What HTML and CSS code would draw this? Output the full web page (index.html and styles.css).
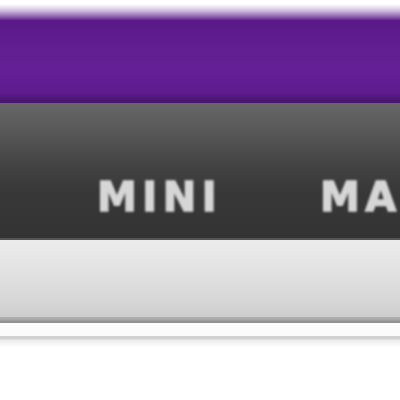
FILE: index.html
```html
<!DOCTYPE html>
<html>
<head>
<meta charset="utf-8">
<link rel="stylesheet" href="styles.css">
</head>
<body>
<div class="page">
  <div class="fade"></div>
  <header class="brand"></header>
  <nav class="nav">
    <span class="nav-item">MINI</span>
    <span class="nav-item">MAXI</span>
  </nav>
  <div class="subbar"></div>
  <div class="rule-dark"></div>
  <div class="strip"></div>
  <div class="rule-light"></div>
</div>
</body>
</html>
```
FILE: styles.css
```css
html, body {
  margin: 0;
  padding: 0;
  background: #ffffff;
  overflow: hidden;
}
.page {
  width: 400px;
  height: 400px;
  display: flex;
  flex-direction: column;
  overflow: hidden;
}
.fade {
  height: 20px;
  background: linear-gradient(to bottom, #ffffff 0px, #ffffff 4px, #ece4f2 7px, #cdb8de 11px, #a07cbb 15px, #70399b 19px, #5f2090 20px);
}
.brand {
  height: 83px;
  background: linear-gradient(to bottom, #5b1a88 0%, #611f92 40%, #641f96 60%, #5e1c8e 88%, #4e1877 95%, #46156c 100%);
}
.nav {
  height: 137px;
  box-sizing: border-box;
  background: linear-gradient(to bottom, #676767 0%, #575757 22%, #444444 45%, #383838 65%, #333333 100%);
  border-bottom: 2px solid #555555;
  display: flex;
  align-items: flex-start;
  padding-left: 97px;
  padding-top: 74px;
  gap: 98px;
  white-space: nowrap;
  overflow: hidden;
}
.nav-item {
  font-family: "DejaVu Sans", "Verdana", sans-serif;
  font-weight: bold;
  font-size: 40px;
  line-height: 40px;
  letter-spacing: 5.5px;
  color: #d6d6d6;
  -webkit-text-stroke: 1.4px #d6d6d6;
  filter: blur(1.1px);
}
.subbar {
  height: 77px;
  background: linear-gradient(to bottom, #ececec 0%, #e2e2e2 40%, #d6d6d6 80%, #cdcdcd 100%);
}
.rule-dark {
  height: 6px;
  background: linear-gradient(to bottom, #b0b0b0 0px, #a6a6a6 3px, #929292 4px, #8e8e8e 6px);
}
.strip {
  height: 13px;
  background: #fbfbfb;
}
.rule-light {
  height: 10px;
  background: linear-gradient(to bottom, #d2d2d2 0px, #d2d2d2 3px, #ececec 4px, #f4f4f4 7px, #fafafa 10px);
}
```
